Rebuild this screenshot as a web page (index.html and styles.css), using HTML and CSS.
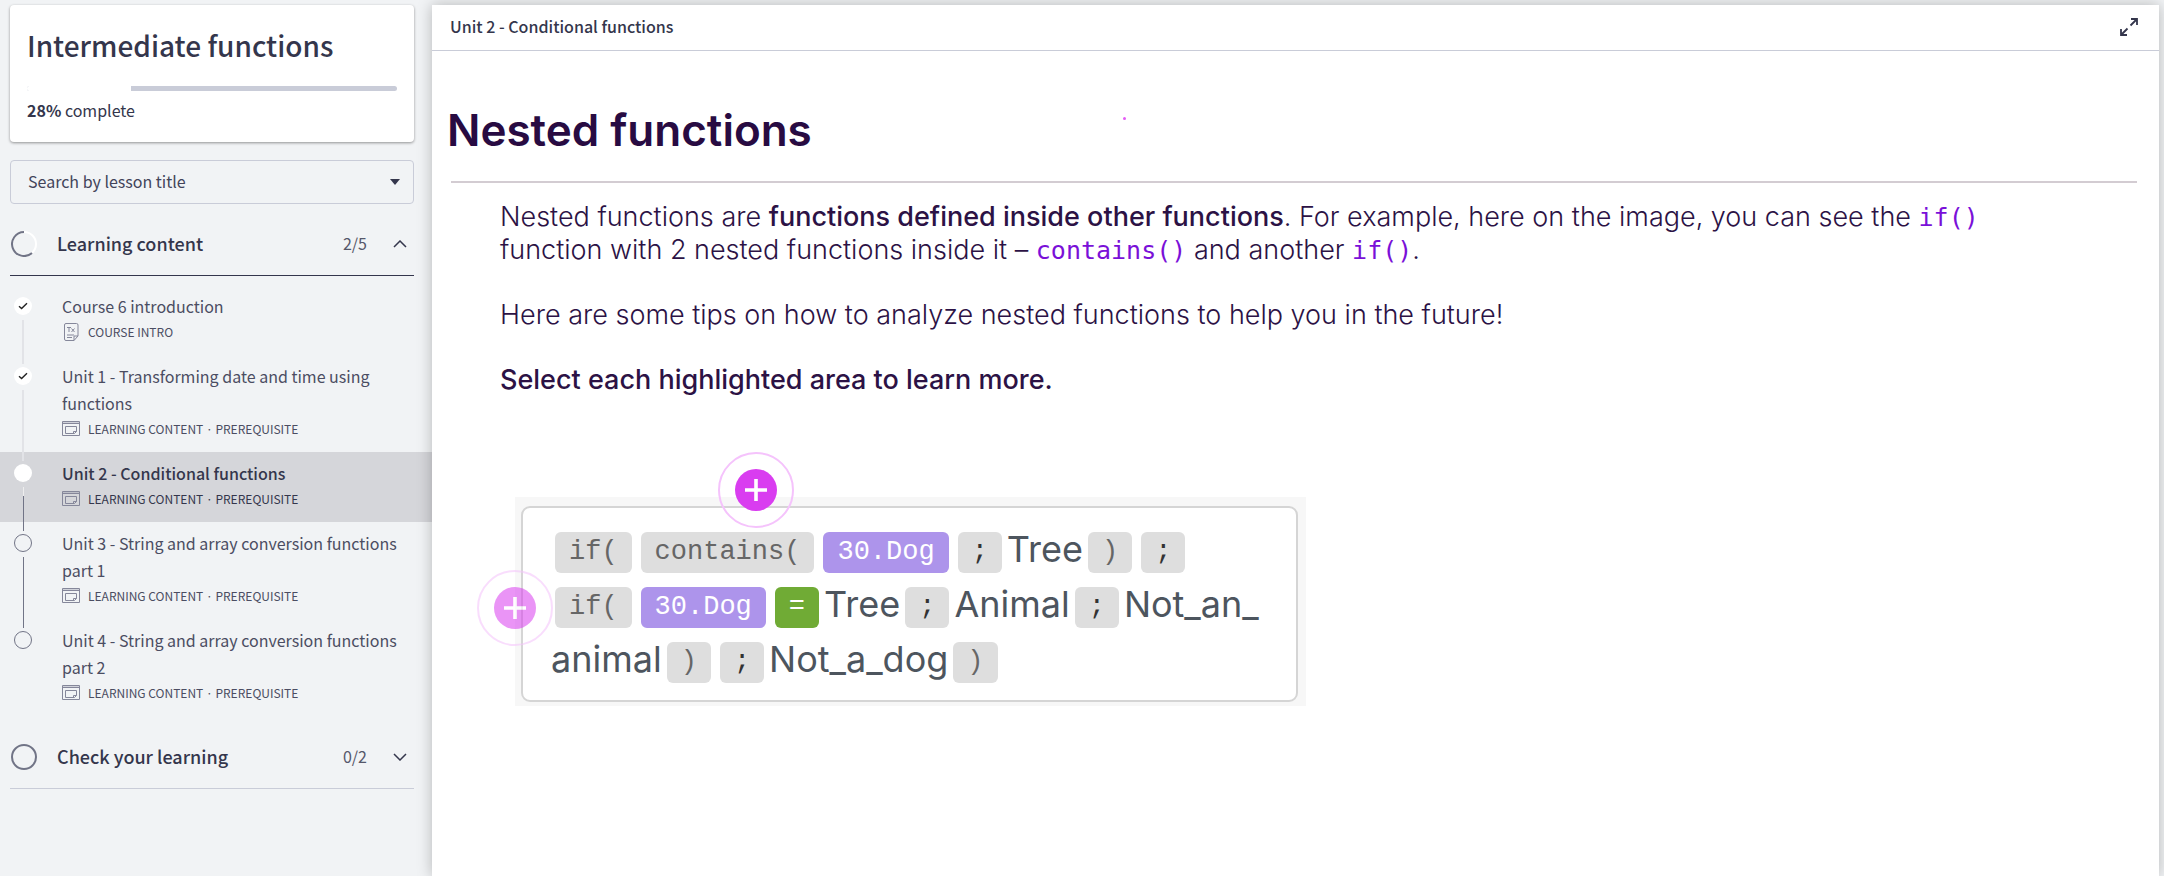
FILE: index.html
```html
<!DOCTYPE html>
<html lang="en">
<head>
<meta charset="utf-8">
<meta name="viewport" content="width=device-width, initial-scale=1">
<title>Intermediate functions</title>
<link rel="stylesheet" href="styles.css">
</head>
<body>
<svg class="defs" width="0" height="0" aria-hidden="true">
  <symbol id="i-check" viewBox="0 0 10 8"><path d="M1 4.2 3.6 6.6 9 1.2" fill="none" stroke="currentColor" stroke-width="1.4"/></symbol>
  <symbol id="i-window" viewBox="0 0 18 15"><path d="M.5 .5h17v14H.5zM.5 2.500h17M3.500 5.500h11v5l-2 2h-9zM14.500 10.500h-3v2" fill="none" stroke="currentColor"/><path d="M1 1h16v1.500H1z" fill="currentColor" opacity=".3"/></symbol>
  <symbol id="i-doc" viewBox="0 0 16 18"><path d="M3 .5h10.500q1.500 0 1.500 1.500v11l-4 4.500H3q-1.500 0-1.500-1.500V2Q1.500 .5 3 .5zM15 13h-4v4.500M4 12h7M4 14.500h5M4 4.500h4M6 4.500V9M8.500 5.500l3 3.500M11.500 5.500l-3 3.500" fill="none" stroke="currentColor"/></symbol>
  <symbol id="i-plus" viewBox="0 0 22 22"><path d="M11 0v22M0 11h22" fill="none" stroke="currentColor" stroke-width="3.600"/></symbol>
</svg>
<div class="app">
  <aside class="sidebar">
    <section class="card">
      <h1 class="card-title">Intermediate functions</h1>
      <div class="progress" role="progressbar" aria-label="Course progress" aria-valuenow="28" aria-valuemin="0" aria-valuemax="100"><div class="progress-done" style="width:28%"></div></div>
      <p class="progress-text"><strong>28%</strong> complete</p>
    </section>
    <div class="search">
      <select class="search-select" aria-label="Search by lesson title"><option>Search by lesson title</option></select>
      <svg class="search-arrow" width="10" height="6" viewBox="0 0 10 6" aria-hidden="true"><path d="M0 0h10L5 6z" fill="currentColor"/></svg>
    </div>
    <button class="section-head open" type="button" aria-expanded="true">
      <svg width="26" height="26" viewBox="0 0 26 26" fill="none" aria-hidden="true"><circle cx="13" cy="13" r="12" stroke="#fff" stroke-width="2"/><path d="M13 1A12 12 0 1 0 21 22" stroke="#717486" stroke-width="2"/></svg>
      <span class="section-name">Learning content</span>
      <span class="section-count">2/5</span>
      <svg width="14" height="8" viewBox="0 0 14 8" fill="none" aria-hidden="true"><path d="M1 7 7 1l6 6" stroke="currentColor" stroke-width="1.500"/></svg>
    </button>
    <nav class="lessons" aria-label="Lessons">
      <a class="lesson" href="#intro">
        <span class="rail"><span class="stub none"></span><span class="dot done"><svg width="10" height="8"><use href="#i-check"/></svg></span><span class="line"></span></span>
        <span class="lesson-body"><span class="lesson-title">Course 6 introduction</span><span class="meta"><svg width="18" height="18"><use href="#i-doc"/></svg>COURSE INTRO</span></span>
      </a>
      <a class="lesson" href="#unit1">
        <span class="rail"><span class="stub"></span><span class="dot done"><svg width="10" height="8"><use href="#i-check"/></svg></span><span class="line"></span></span>
        <span class="lesson-body"><span class="lesson-title">Unit 1 - Transforming date and time using functions</span><span class="meta"><svg width="18" height="15"><use href="#i-window"/></svg>LEARNING CONTENT · PREREQUISITE</span></span>
      </a>
      <a class="lesson current" href="#unit2" aria-current="page">
        <span class="rail"><span class="stub"></span><span class="dot done"></span><span class="line half"></span></span>
        <span class="lesson-body"><span class="lesson-title">Unit 2 - Conditional functions</span><span class="meta"><svg width="18" height="15"><use href="#i-window"/></svg>LEARNING CONTENT · PREREQUISITE</span></span>
      </a>
      <a class="lesson todo" href="#unit3">
        <span class="rail"><span class="stub"></span><span class="dot"></span><span class="line"></span></span>
        <span class="lesson-body"><span class="lesson-title">Unit 3 - String and array conversion functions part 1</span><span class="meta"><svg width="18" height="15"><use href="#i-window"/></svg>LEARNING CONTENT · PREREQUISITE</span></span>
      </a>
      <a class="lesson todo" href="#unit4">
        <span class="rail"><span class="stub"></span><span class="dot"></span><span class="line none"></span></span>
        <span class="lesson-body"><span class="lesson-title">Unit 4 - String and array conversion functions part 2</span><span class="meta"><svg width="18" height="15"><use href="#i-window"/></svg>LEARNING CONTENT · PREREQUISITE</span></span>
      </a>
    </nav>
    <button class="section-head" type="button" aria-expanded="false">
      <svg width="26" height="26" viewBox="0 0 26 26" fill="none" aria-hidden="true"><circle cx="13" cy="13" r="12" stroke="#717486" stroke-width="2"/></svg>
      <span class="section-name">Check your learning</span>
      <span class="section-count">0/2</span>
      <svg width="14" height="8" viewBox="0 0 14 8" fill="none" aria-hidden="true"><path d="M1 1l6 6 6-6" stroke="currentColor" stroke-width="1.500"/></svg>
    </button>
  </aside>
  <main class="viewer">
    <header class="viewer-head">
      <span>Unit 2 - Conditional functions</span>
      <button class="expand" type="button" aria-label="Full screen">
        <svg width="18" height="18" viewBox="0 0 18 18" fill="none" stroke="currentColor" stroke-width="1.800" aria-hidden="true"><path d="M10.500 7.500 17 1M11 1h6v6M7.500 10.500 1 17M1 11v6h6"/></svg>
      </button>
    </header>
    <article class="content">
      <div class="title-row"><h2 class="content-title">Nested functions</h2><span class="speck"></span></div>
      <div class="copy">
        <p>Nested functions are <strong>functions defined inside other functions</strong>. For example, here on the image, you can see the <code>if()</code> function with 2 nested functions inside it – <code>contains()</code> and another <code>if()</code>.</p>
        <p>Here are some tips on how to analyze nested functions to help you in the future!</p>
        <p><strong>Select each highlighted area to learn more.</strong></p>
      </div>
      <div class="figure">
        <div class="formula">
          <div class="row"><span class="chip">if(</span><span class="chip">contains(</span><span class="chip var">30.Dog</span><span class="chip sep">;</span><span class="word">Tree</span><span class="chip">)</span><span class="chip sep">;</span></div>
          <div class="row"><span class="chip">if(</span><span class="chip var">30.Dog</span><span class="chip op">=</span><span class="word">Tree</span><span class="chip sep">;</span><span class="word">Animal</span><span class="chip sep">;</span><span class="word">Not_an_</span></div>
          <div class="row"><span class="word">animal</span><span class="chip">)</span><span class="chip sep">;</span><span class="word">Not_a_dog</span><span class="chip">)</span></div>
        </div>
        <button class="hotspot top" type="button" aria-label="Outer if function"><span class="disc"><svg width="22" height="22"><use href="#i-plus"/></svg></span></button>
        <button class="hotspot side" type="button" aria-label="Nested if function"><span class="disc"><svg width="22" height="22"><use href="#i-plus"/></svg></span></button>
      </div>
    </article>
  </main>
</div>
</body>
</html>
```

FILE: styles.css
```css
* { box-sizing: border-box; }
body {
  margin: 0;
  background: #f1f3f5;
  color: #34364c;
  font: 16px/27px "Noto Sans CJK JP", "Noto Sans", sans-serif;
}
h1, h2, p { margin: 0; }
button { font: inherit; color: inherit; border: 0; background: none; padding: 0; cursor: pointer; }
.defs { position: absolute; }
.app { display: grid; grid-template-columns: 432px minmax(0, 1fr); min-height: 100vh; }

.sidebar { padding-top: 5px; }
.card {
  margin: 0 18px 18px 10px;
  padding: 18px 17px;
  background: #fff;
  border-radius: 4px;
  box-shadow: 0 1px 3px rgba(0, 0, 0, .4);
}
.card-title { font-size: 28px; font-weight: 500; line-height: 44px; }
.progress { height: 5px; margin-top: 19px; border-radius: 3px; background: #c9ccd8; overflow: hidden; }
.progress-done { height: 5px; background: #fff; }
.progress-text { margin-top: 6px; }
.progress-text strong { font-weight: 700; }

.search { display: grid; align-items: center; margin: 0 18px 8px 10px; }
.search-select {
  grid-area: 1 / 1;
  width: 100%;
  height: 44px;
  padding: 0 17px 2px;
  appearance: none;
  border: 1px solid #c9ccd8;
  border-radius: 4px;
  background: transparent;
  color: #42445a;
  font: inherit;
}
.search-arrow { grid-area: 1 / 1; justify-self: end; margin-right: 14px; pointer-events: none; }

.section-head {
  display: flex;
  align-items: center;
  width: 404px;
  height: 64px;
  margin-left: 10px;
  padding: 0 7px 0 1px;
  border-bottom: 1px solid #c9ccd8;
  text-align: left;
}
.section-head.open { border-color: #34364c; }
.section-name { flex: 1; margin-left: 20px; font-size: 18px; font-weight: 500; }
.section-count { margin-right: 26px; color: #55576a; }

.lessons { padding: 9px 0; }
.lesson { display: flex; gap: 30px; padding-left: 14px; color: #4b4d62; text-decoration: none; }
.current { background: #d5d6da; color: #34364c; }
.current .lesson-title { font-weight: 500; }
.rail { display: flex; flex-direction: column; align-items: center; width: 18px; }
.stub { width: 2px; height: 9px; background: #e2e3e7; }
.dot {
  display: flex;
  align-items: center;
  justify-content: center;
  width: 18px;
  height: 18px;
  margin: 3px 0 5px;
  border: 1px solid #717486;
  border-radius: 50%;
}
.dot.done { border: 0; background: #fff; color: #222; }
.line { flex: 1; width: 2px; background: #e2e3e7; }
.todo .stub, .todo .line { width: 1px; background: #717486; }
.line.half { width: 1px; background: linear-gradient(#eee 9px, #717486 9px); }
.none, .todo .line.none { background: none; }
.lesson-body { flex: 1; display: flex; flex-direction: column; padding: 8px 20px 12px 0; }
.meta { display: flex; align-items: center; gap: 8px; height: 23px; font-size: 12px; }
.meta svg { color: #85879a; }

.viewer {
  display: flex;
  flex-direction: column;
  margin: 5px 5px 0 0;
  background: #fff;
  box-shadow: 0 0 14px rgba(0, 0, 0, .25);
}
.viewer-head {
  display: flex;
  align-items: center;
  justify-content: space-between;
  height: 46px;
  padding: 0 21px 2px 18px;
  border-bottom: 1px solid #c9ccd8;
  font-weight: 500;
}
.expand { display: flex; }
.content { padding: 36px 22px 40px 19px; color: #2c1245; font-family: Inter, sans-serif; }
.title-row { display: flex; height: 96px; border-bottom: 2px solid #d3ccd2; }
.content-title { width: 676px; margin-left: -4px; font-size: 44px; font-weight: 600; line-height: 86px; color: #280b42; }
.speck { width: 3px; height: 3px; margin-top: 30px; border-radius: 50%; background: #e45cf5; }
.copy { display: flex; flex-direction: column; gap: 32px; padding: 17px 100px 0 49px; font-size: 27px; font-weight: 300; line-height: 33px; }
.copy strong { font-weight: 500; }
.copy code { font-family: "DejaVu Sans Mono", monospace; font-size: 25px; line-height: 1px; color: #7a10d8; }

.figure { position: relative; width: 791px; margin: 101px 0 0 64px; padding: 9px 8px 4px 6px; background: #f7f7f7; }
.formula {
  display: flex;
  flex-direction: column;
  gap: 14px;
  padding: 24px 32px 17px;
  border: 2px solid #d5d5d5;
  border-radius: 9px;
  background: #fff;
}
.row { display: flex; gap: 9px; height: 41px; }
.chip {
  padding: 0 14px;
  border-radius: 6px;
  background: #dedede;
  color: #666;
  font: 27px/41px "Liberation Mono", monospace;
}
.sep { color: #333; }
.var { background: #ad94eb; color: #fff; }
.op { background: #70ab35; color: #fff; }
.word { margin: 0 -4px; color: #4d555e; font-size: 36px; font-weight: 400; line-height: 35px; }
.hotspot {
  position: absolute;
  display: flex;
  align-items: center;
  justify-content: center;
  width: 76px;
  height: 76px;
  border: 2px solid #f5c3fc;
  border-radius: 50%;
}
.disc { display: flex; align-items: center; justify-content: center; width: 42px; height: 42px; border-radius: 50%; background: #d93df0; color: #fff; }
.top { left: 203px; top: -45px; }
.side { left: -38px; top: 73px; opacity: .55; }
```
